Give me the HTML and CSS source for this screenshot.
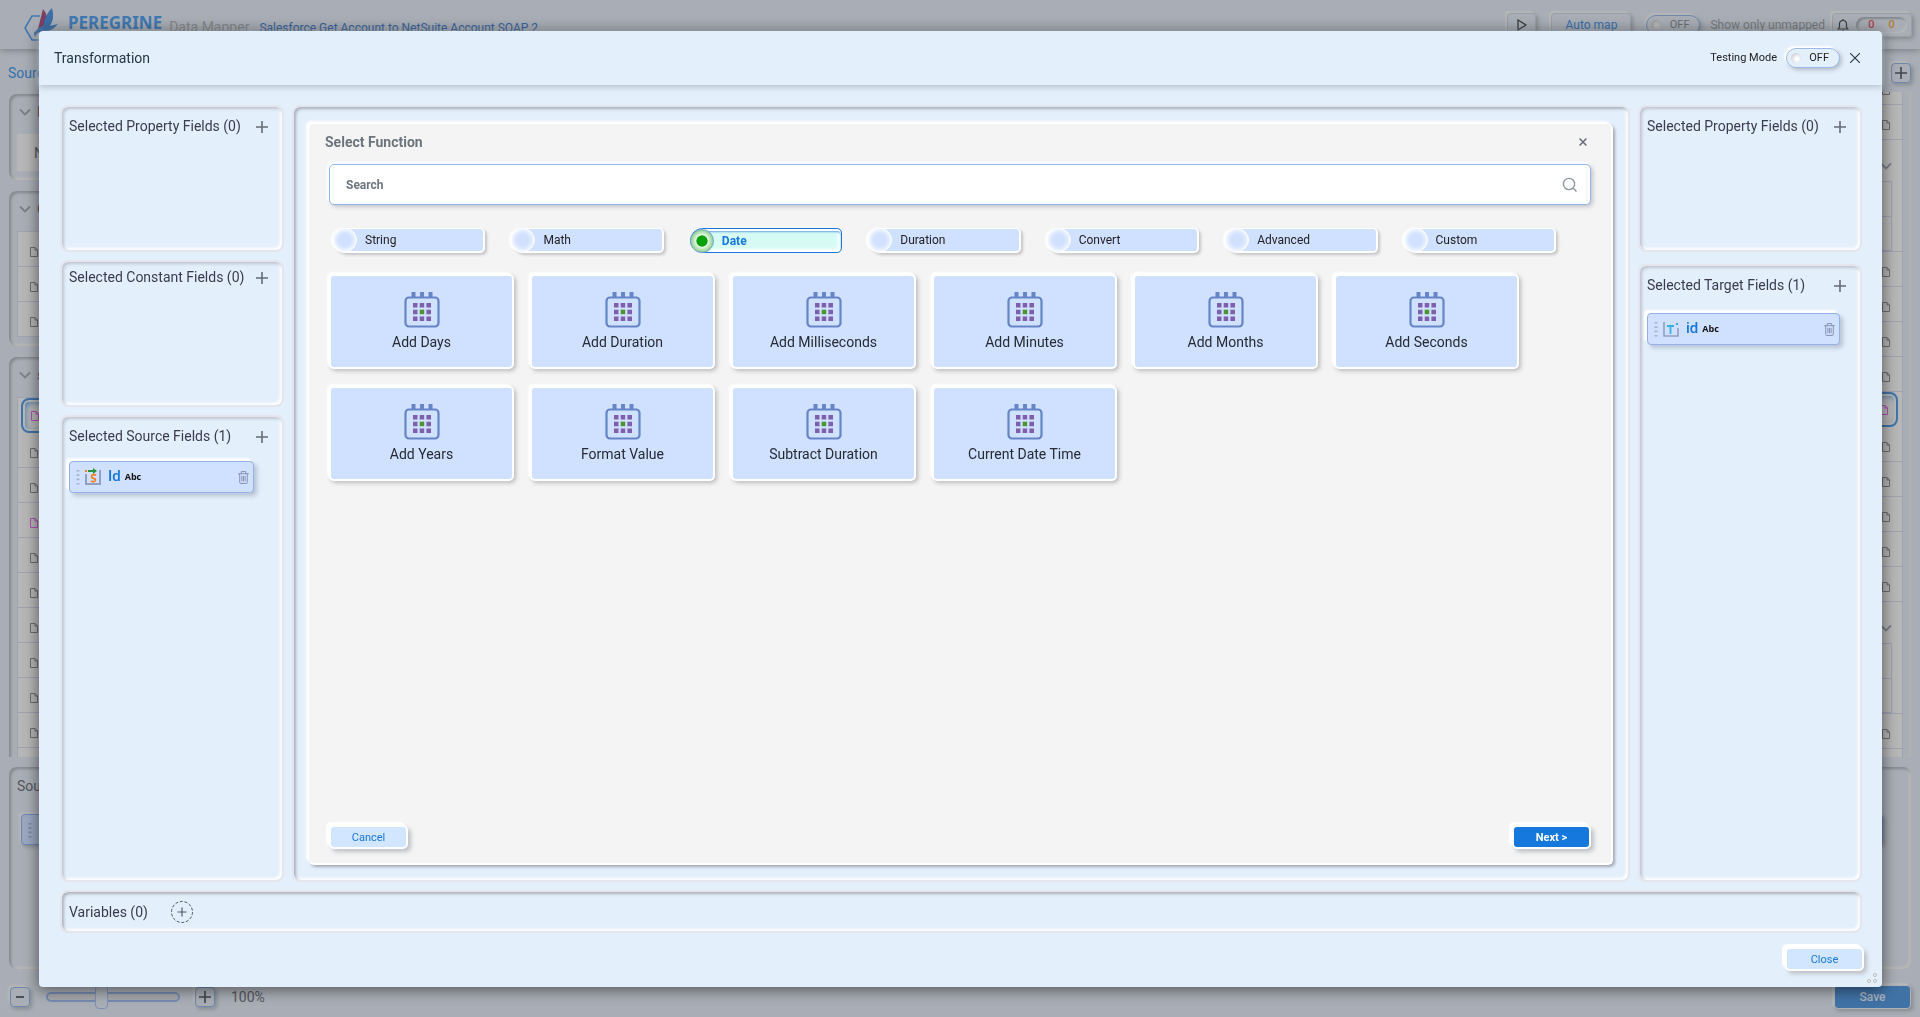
FILE: index.html
```html
<!DOCTYPE html>
<html lang="en">
<head>
<meta charset="utf-8">
<title>Peregrine Data Mapper</title>
<link rel="stylesheet" href="styles.css">
</head>
<body>
<svg class="symbols" width="0" height="0" aria-hidden="true">
  <symbol id="plus" viewBox="0 0 12 12"><path d="M6 0V12M0 6H12" fill="none" stroke="currentColor" stroke-width="1.6"/></symbol>
  <symbol id="cross" viewBox="0 0 10 10"><path d="M0 0L10 10M10 0L0 10" fill="none" stroke="currentColor" stroke-width="1.1"/></symbol>
  <symbol id="file" viewBox="0 0 8 10"><path d="M.5 .5H5L7.500 3V9.500H.5ZM5 .5V3H7.500" fill="none" stroke="currentColor"/></symbol>
  <symbol id="chevron" viewBox="0 0 12 8"><path d="M1 1.500L6 6.500L11 1.500" fill="none" stroke="currentColor" stroke-width="1.800"/></symbol>
  <symbol id="trash" viewBox="0 0 10 12"><path d="M0 2.500H10M3 2.500V.5H7V2.500M1.500 2.500V10.500Q1.500 11.500 2.500 11.500H7.500Q8.500 11.500 8.500 10.500V2.500M3.500 4.500V9.500M5 4.500V9.500M6.500 4.500V9.500" fill="none" stroke="currentColor" stroke-width=".9"/></symbol>
  <symbol id="grip" viewBox="0 0 4 16"><path d="M2 1V16" fill="none" stroke="currentColor" stroke-width="3" stroke-dasharray="1.600 2.700"/></symbol>
  <symbol id="calendar" viewBox="0 0 36 36">
    <rect x="1.500" y="5.500" width="33" height="29" rx="3.500" fill="none" stroke="#6585c6" stroke-width="2.200"/>
    <path d="M7.500 0H11.500V5H7.500ZM16 0H20V5H16ZM24.500 0H28.500V5H24.500Z" fill="#6585c6"/>
    <path d="M9 11H13.500V15.500H9ZM15.700 11H20.200V15.500H15.700ZM22.400 11H27V15.500H22.400ZM9 17.700H13.500V22.200H9ZM22.400 17.700H27V22.200H22.400ZM9 24.400H13.500V29H9ZM15.700 24.400H20.200V29H15.700ZM22.400 24.400H27V29H22.400Z" fill="#7e5fae"/>
    <path d="M15.700 17.700H20.200V22.200H15.700Z" fill="#4a962d"/>
  </symbol>
</svg>

<div class="app">
  <header class="app-header">
    <svg class="logo" viewBox="0 0 38 34">
      <path d="M16 8H8L1 20L8 32H20" fill="none" stroke="#4079b2" stroke-width="1.600"/>
      <path d="M14 21L19 1Q26 9 21 17Z" fill="#7d3f64"/>
      <path d="M10 25Q14 20 19 18Q22 5 28 0Q31 10 26 18L34 16Q26 25 17 24Q13 24 11 29Z" fill="#3c6fa8"/>
    </svg>
    <span class="brand">PEREGRINE</span>
    <span class="product">Data Mapper</span>
    <a class="mapping" href="#">Salesforce Get Account to NetSuite Account SOAP 2</a>
    <div class="app-tools">
      <button class="tool tool-run" aria-label="Run"><svg width="10" height="12" viewBox="0 0 10 12"><path d="M1 1L9 6L1 11Z" fill="none" stroke="#35363b" stroke-width="1.200"/></svg></button>
      <button class="tool tool-map">Auto map</button>
      <label class="unmapped"><span class="switch switch-dim"><input type="checkbox"><span class="knob"></span>OFF</span>Show only unmapped</label>
      <button class="tool tool-alerts" aria-label="Notifications"><svg width="12" height="13" viewBox="0 0 12 13"><path d="M1 10H11L9.500 8V5Q9.500 1.500 6 1.500Q2.500 1.500 2.500 5V8ZM5 12H7M6 0V1.500" fill="none" stroke="#35363b" stroke-width="1.100"/></svg><span class="counts"><span class="errors">0</span><span class="warnings">0</span></span></button>
    </div>
  </header>

  <div class="subbar"><span>Source</span><button class="square" aria-label="Add target"><svg width="12" height="12"><use href="#plus"/></svg></button></div>

  <main class="mapper">
    <div class="side side-left">
      <section class="group"><h2><svg width="12" height="8"><use href="#chevron"/></svg>Property</h2><p class="empty">No fields</p></section>
      <section class="group"><h2><svg width="12" height="8"><use href="#chevron"/></svg>Constant</h2>
        <ul class="rows"><li><svg><use href="#file"/></svg></li><li><svg><use href="#file"/></svg></li><li><svg><use href="#file"/></svg></li></ul></section>
      <section class="group"><h2><svg width="12" height="8"><use href="#chevron"/></svg>sObject</h2>
        <ul class="rows"><li class="mapped chosen"><svg><use href="#file"/></svg></li><li><svg><use href="#file"/></svg></li><li><svg><use href="#file"/></svg></li><li class="mapped"><svg><use href="#file"/></svg></li><li><svg><use href="#file"/></svg></li><li><svg><use href="#file"/></svg></li><li><svg><use href="#file"/></svg></li><li><svg><use href="#file"/></svg></li><li><svg><use href="#file"/></svg></li><li><svg><use href="#file"/></svg></li><li></li></ul></section>
    </div>
    <div class="side side-right">
      <ul class="rows"><li><svg><use href="#file"/></svg></li><li><svg><use href="#file"/></svg></li><li class="nest"><svg class="arrow"><use href="#chevron"/></svg><div class="nest-box"><span></span><span></span></div></li><li><svg><use href="#file"/></svg></li><li><svg><use href="#file"/></svg></li><li><svg><use href="#file"/></svg></li><li><svg><use href="#file"/></svg></li><li class="mapped chosen"><svg><use href="#file"/></svg></li><li><svg><use href="#file"/></svg></li><li><svg><use href="#file"/></svg></li><li><svg><use href="#file"/></svg></li><li><svg><use href="#file"/></svg></li><li><svg><use href="#file"/></svg></li><li class="nest"><svg class="arrow"><use href="#chevron"/></svg><div class="nest-box"><span></span><span></span></div></li><li><svg><use href="#file"/></svg></li><li></li></ul>
    </div>
  </main>

  <section class="links"><h2>Source</h2><div class="link-row"><svg width="4" height="16"><use href="#grip"/></svg></div></section>

  <footer class="zoombar">
    <button class="square" aria-label="Zoom out"><svg width="10" height="10" viewBox="0 0 10 10"><path d="M1 5H9" stroke="currentColor" stroke-width="1.800"/></svg></button>
    <input class="zoom" type="range" min="0" max="100" value="40" aria-label="Zoom">
    <button class="square" aria-label="Zoom in"><svg width="12" height="12"><use href="#plus"/></svg></button>
    <span class="percent">100%</span>
    <button class="save">Save</button>
  </footer>
</div>

<div class="backdrop">
  <div class="dialog" role="dialog" aria-labelledby="dialog-title">
    <header class="dialog-head">
      <h1 id="dialog-title">Transformation</h1>
      <label class="testing">Testing Mode<span class="switch"><input type="checkbox"><span class="knob"></span>OFF</span></label>
      <button class="icon-button head-close" aria-label="Close dialog"><svg width="10" height="10"><use href="#cross"/></svg></button>
    </header>

    <div class="dialog-body">
      <div class="columns">
        <div class="stack">
          <section class="panel short"><div class="panel-head"><h2>Selected Property Fields (0)</h2><button class="icon-button" aria-label="Add property field"><svg width="12" height="12"><use href="#plus"/></svg></button></div></section>
          <section class="panel short tight"><div class="panel-head"><h2>Selected Constant Fields (0)</h2><button class="icon-button" aria-label="Add constant field"><svg width="12" height="12"><use href="#plus"/></svg></button></div></section>
          <section class="panel tall"><div class="panel-head"><h2>Selected Source Fields (1)</h2><button class="icon-button" aria-label="Add source field"><svg width="12" height="12"><use href="#plus"/></svg></button></div>
            <div class="field field-source"><svg class="grip" width="4" height="16"><use href="#grip"/></svg>
              <svg width="18" height="18" viewBox="0 0 18 18"><path d="M2 6V16H16V2" fill="none" stroke="#929fc3" stroke-width="2"/><path d="M1 2H3V4H1Z" fill="#f47b20"/><path d="M4 2H9V0L13 3L9 6V4H4Z" fill="#27933d"/><path d="M12 7.500Q11 6.500 9.500 6.700Q7.500 7 7.500 8.500Q7.500 10 9.500 10.300Q11.800 10.800 11.500 12.200Q11 13.800 9.300 13.700Q7.800 13.600 7 12.700" fill="none" stroke="#f47b20" stroke-width="1.700"/></svg>
              <b>Id</b><small>Abc</small><button class="icon-button delete" aria-label="Delete Id"><svg width="11" height="13"><use href="#trash"/></svg></button></div>
          </section>
        </div>

        <section class="panel stage">
          <div class="picker">
            <div class="picker-head"><h2>Select Function</h2><button class="icon-button" aria-label="Close function list"><svg width="8" height="8" viewBox="0 0 7 7"><path d="M.5 .5L6.500 6.500M6.500 .5L.5 6.500" stroke="currentColor" stroke-width="1.300"/></svg></button></div>
            <div class="search"><input type="search" placeholder="Search" aria-label="Search"><svg width="16" height="16" viewBox="0 0 16 16"><circle cx="7" cy="7" r="5.600" fill="none" stroke="#8d999f" stroke-width="1.400"/><path d="M11 11L14.500 14.500" stroke="#8d999f" stroke-width="1.400"/></svg></div>
            <div class="tabs">
              <label class="tab"><input type="radio" name="kind"><span>String</span></label>
              <label class="tab"><input type="radio" name="kind"><span>Math</span></label>
              <label class="tab tab-on"><input type="radio" name="kind" checked><span>Date</span></label>
              <label class="tab"><input type="radio" name="kind"><span>Duration</span></label>
              <label class="tab"><input type="radio" name="kind"><span>Convert</span></label>
              <label class="tab"><input type="radio" name="kind"><span>Advanced</span></label>
              <label class="tab"><input type="radio" name="kind"><span>Custom</span></label>
            </div>
            <div class="functions">
              <button class="function"><svg><use href="#calendar"/></svg>Add Days</button>
              <button class="function"><svg><use href="#calendar"/></svg>Add Duration</button>
              <button class="function"><svg><use href="#calendar"/></svg>Add Milliseconds</button>
              <button class="function"><svg><use href="#calendar"/></svg>Add Minutes</button>
              <button class="function"><svg><use href="#calendar"/></svg>Add Months</button>
              <button class="function"><svg><use href="#calendar"/></svg>Add Seconds</button>
              <button class="function"><svg><use href="#calendar"/></svg>Add Years</button>
              <button class="function"><svg><use href="#calendar"/></svg>Format Value</button>
              <button class="function"><svg><use href="#calendar"/></svg>Subtract Duration</button>
              <button class="function"><svg><use href="#calendar"/></svg>Current Date Time</button>
            </div>
            <div class="picker-foot"><button class="action">Cancel</button><button class="action primary">Next &gt;</button></div>
          </div>
        </section>

        <div class="stack stack-right">
          <section class="panel short"><div class="panel-head"><h2>Selected Property Fields (0)</h2><button class="icon-button" aria-label="Add property field"><svg width="12" height="12"><use href="#plus"/></svg></button></div></section>
          <section class="panel tall"><div class="panel-head"><h2>Selected Target Fields (1)</h2><button class="icon-button" aria-label="Add target field"><svg width="12" height="12"><use href="#plus"/></svg></button></div>
            <div class="field field-target"><svg class="grip" width="4" height="16"><use href="#grip"/></svg>
              <svg width="18" height="18" viewBox="0 0 18 18"><path d="M2 2V16H16V8" fill="none" stroke="#929fc3" stroke-width="1.600"/><path d="M5 6H12M8.500 6V14" stroke="#35b0e6" stroke-width="1.800"/><path d="M14 3H16V5H14Z" fill="#35b0e6"/></svg>
              <b>id</b><small>Abc</small><button class="icon-button delete" aria-label="Delete id"><svg width="11" height="13"><use href="#trash"/></svg></button></div>
          </section>
        </div>
      </div>

      <section class="panel variables"><h2>Variables (0)</h2><button class="icon-button" aria-label="Add variable"><svg width="24" height="24" viewBox="0 0 24 24"><circle cx="12" cy="12" r="10.500" fill="none" stroke="#4c5f6b" stroke-dasharray="3 1.700"/><path d="M12 7.500V16.500M7.500 12H16.500" stroke="#4c5f6b" stroke-width="1.200"/></svg></button></section>
    </div>

    <footer class="dialog-foot"><button class="action">Close</button></footer>
    <svg class="resize" width="12" height="12" viewBox="0 0 12 12"><g fill="#f5f5f5" stroke="#b9bcc0"><circle cx="9" cy="3" r="1.500"/><circle cx="3" cy="9" r="1.500"/><circle cx="9" cy="9" r="1.500"/></g></svg>
  </div>
</div>
</body>
</html>
```
FILE: styles.css
```css
* { box-sizing: border-box; }
body { margin: 0; font-family: Roboto, "Liberation Sans", sans-serif; font-size: 14px; line-height: 16px; color: #3a3c4e; }
h1, h2, p, ul { margin: 0; padding: 0; font-size: 14px; font-weight: 400; list-style: none; }
button, input { font-family: inherit; margin: 0; }
button { padding: 0; border: 0; background: none; color: inherit; }
svg { display: block; flex: none; }
.symbols { position: absolute; }

/* Mapper page behind the dialog */
.app { display: flex; flex-direction: column; height: 100vh; overflow: hidden; background: #a9aeb6; color: #55575c; }
.app-header { display: flex; flex: none; align-items: flex-start; height: 49px; padding: 8px 8px 0 24px; box-shadow: 0 2px 6px #7f848b; }
.logo { width: 38px; height: 34px; }
.brand { margin: 3px 0 0 6px; font: 700 17px/24px "Noto Sans", sans-serif; color: #4079b2; }
.product { margin: 11px 0 0 7px; font-size: 14px; color: #85878a; }
.mapping { margin: 12px 0 0 10px; font-size: 12px; color: #3763a0; text-decoration: none; }
.app-tools { display: flex; gap: 15px; margin: 5px 0 0 auto; align-items: flex-start; font-size: 12px; }
.tool { display: flex; align-items: center; justify-content: center; height: 24px; border: 1px solid #9a9fa7; border-radius: 4px; box-shadow: -2px -2px 1px #b5b6b8, 2px 2px 4px #868a91; font-size: 12px; }
.tool-run { width: 29px; }
.tool-map { width: 80px; color: #3470ad; }
.tool-alerts { gap: 7px; width: 80px; color: #35363b; }
.counts { display: flex; gap: 14px; padding: 0 12px; line-height: 16px; border-radius: 8px; box-shadow: inset 2px 2px 2px #858990, inset -1px -1px 2px #b9babc; font-weight: 500; font-size: 11px; }
.errors { color: #b34545; }
.warnings { color: #b57b35; }
.unmapped { display: flex; align-items: center; gap: 10px; height: 24px; margin-right: -8px; color: #777a7f; }
.switch { display: flex; align-items: center; width: 54px; height: 20px; padding: 0 10px 0 4px; border: 1px solid #9ab9ea; border-radius: 10px; box-shadow: -2px -2px 2px #fff, 2px 2px 4px #b4bac4; font-size: 11px; color: #222; background: #e3effb; }
.switch input { position: absolute; opacity: 0; }
.knob { width: 10px; height: 10px; margin-right: auto; border-radius: 50%; background: radial-gradient(circle at 60% 60%, #fff 15%, #b9bdc6); }
.switch-dim { border-color: #6f87ab; background: #a9aeb6; color: #6a6c70; box-shadow: -2px -2px 2px #b5b6b8, 2px 2px 4px #868a91; }
.switch-dim .knob { background: radial-gradient(circle at 60% 60%, #b9babc 20%, #8c9097); }
.subbar { display: flex; flex: none; align-items: center; justify-content: space-between; height: 43px; padding: 4px 9px 0 8px; color: #3470ad; }
.square { display: flex; flex: none; align-items: center; justify-content: center; width: 20px; height: 20px; border: 1px solid #6f87ab; border-radius: 4px; color: #41444c; box-shadow: -2px -2px 2px #b5b6b8, 2px 2px 4px #868a91; }
.mapper { display: flex; flex: 1; min-height: 0; justify-content: space-between; padding: 0 9px; overflow: hidden; }
.side { width: 40%; }
.side-left { display: flex; flex-direction: column; gap: 11px; padding-top: 2px; }
.group { flex: none; padding: 9px 8px; border-radius: 8px; box-shadow: inset 2px 2px 3px #84888f, inset -2px -2px 2px #b9b8b5; }
.group h2 { display: flex; align-items: center; gap: 6px; height: 18px; margin-bottom: 13px; padding-left: 2px; color: #55575c; }
.group h2 svg, .arrow { color: #7b8087; }
.empty { height: 37px; padding-left: 17px; line-height: 38px; background: #b7b7b7; }
.rows { background: #b7b7b7; border: solid #a0a4b0; border-width: 1px 0 0 1px; }
.rows li { display: flex; align-items: center; height: 35px; padding: 6px 12px 0; border-bottom: 1px solid #9fa3b0; color: #6b6d70; }
.rows li svg { width: 8px; height: 10px; }
.rows .mapped { color: #b04fb2; }
.rows .chosen { padding: 0 8px; border: 2px solid #3f75ab; border-radius: 8px; box-shadow: inset 0 0 0 2px #b7b7b7, inset 2px 2px 6px #3f75ab; margin-left: 3px; }
.side-right { padding-right: 8px; box-shadow: inset -2px 0 2px #b3b3b0; }
.side-right .rows { margin-top: -23px; border-width: 1px 1px 0 0; }
.side-right li { justify-content: flex-end; }
.side-right .chosen { margin: 0 4px 0 0; }
.rows .nest { flex-direction: column; align-items: flex-end; height: 112px; padding: 0 10px 0 0; }
.rows .arrow { width: 12px; height: 8px; margin: 16px 0 11px; }
.nest-box { width: 80%; border: 1px solid #9fa3b0; }
.nest-box span { display: block; height: 34px; border-top: 1px solid #9fa3b0; }
.nest-box span:first-child { border-top: 0; }
.links { flex: none; height: 202px; margin: 10px 9px 0; padding: 10px 8px; border-radius: 8px; box-shadow: inset 2px 2px 3px #84888f, inset -2px -2px 2px #b9b8b5; }
.links h2 { line-height: 18px; }
.link-row { display: flex; align-items: center; height: 31px; margin: 19px 20px 0 4px; padding-left: 6px; border: 1px solid #6d86b5; border-radius: 4px; background: #9ba8c0; color: #7b87a1; box-shadow: -2px -2px 2px #b5b6b8, 2px 2px 4px #868a91; }
.zoombar { display: flex; flex: none; align-items: center; height: 48px; padding: 8px 9px 0 10px; }
.zoom { appearance: none; width: 134px; height: 10px; margin: 0 15px 0 16px; border: 2px solid #758bb0; border-radius: 5px; background: #a5a7aa; }
.zoom::-webkit-slider-thumb { appearance: none; width: 13px; height: 24px; border: 1px solid #7b90b3; border-radius: 4px; background: #a9aeb6; }
.percent { margin-left: 16px; }
.save { width: 77px; height: 24px; margin-left: auto; border: 1px solid #b0b2b5; border-radius: 4px; background: #4072a6; color: #a9b4c0; font-size: 12px; font-weight: 500; box-shadow: -2px -2px 1px #b5b6b8, 2px 2px 4px #868a91; }

/* Transformation dialog */
.backdrop { position: fixed; inset: 0; display: flex; padding: 31px 38px 30px 39px; }
.dialog { position: relative; display: flex; flex: 1; flex-direction: column; min-width: 0; border-radius: 4px; background: #e3effb; box-shadow: 0 2px 14px 2px rgba(0, 0, 0, .45); }
.dialog-head { display: flex; flex: none; align-items: center; height: 54px; padding: 0 22px 0 15px; box-shadow: 0 2px 6px #b4bfcb; color: #253746; }
.testing { display: flex; align-items: center; gap: 9px; margin-left: auto; font-size: 11px; color: #222; }
.icon-button { display: flex; flex: none; align-items: center; justify-content: center; color: #666c76; }
.head-close { margin-left: 10px; color: #253746; }
.dialog-body { display: flex; flex: 1; flex-direction: column; gap: 8px; min-height: 0; padding: 20px 20px 0 21px; }
.columns { display: grid; flex: 1; grid-template-columns: 224px minmax(0, 1fr) 224px; gap: 8px; min-height: 0; }
.stack { display: flex; flex-direction: column; gap: 8px; }
.stack-right { gap: 12px; }
.panel { border: 2px solid #e4e5ed; border-radius: 8px; box-shadow: inset 2px 2px 3px #bfc6d1, inset -2px -2px 3px #fff; }
.short { flex: none; height: 147px; }
.tall { flex: 1; }
.panel-head { display: flex; align-items: center; justify-content: space-between; height: 38px; padding: 2px 14px 0 7px; }
.panel-head h2 { margin-bottom: 2px; }
.tight .panel-head { height: 30px; }
.field { display: flex; align-items: center; height: 32px; margin-left: 7px; padding: 0 4px 0 6px; border: 1px solid #94b2e8; border-radius: 4px; background: #d0e0ff; box-shadow: -3px -3px 2px #fff, 3px 3px 4px #b9c4d4; }
.field-source { width: 185px; margin-top: 6px; }
.field-target { width: 193px; margin-top: 9px; }
.grip { margin-right: 4px; color: #a9b4cd; }
.field b { margin: 0 4px 2px 6px; font-size: 15px; font-weight: 500; color: #1478dc; }
.field small { font: 700 9px/12px "Open Sans", sans-serif; color: #111; }
.delete { margin-left: auto; color: #8592ad; }
.stage { display: flex; padding: 17px 15px 15px; box-shadow: inset 2px 2px 3px #a9b1bd, inset -2px -2px 3px #fff; }
.picker { display: flex; flex: 1; flex-direction: column; min-width: 0; padding: 10px 20px 14px; border: solid #fff; border-width: 0 2px 2px 0; border-radius: 5px; background: #f4f4f4; box-shadow: -3px -3px 3px #fff, 2px 2px 3px #a3aab5; }
.picker-head { display: flex; align-items: center; justify-content: space-between; height: 16px; margin: 0 4px 14px -4px; }
.picker-head h2 { font-weight: 700; color: #6c757d; }
.search { display: flex; align-items: center; height: 41px; padding: 0 12px 0 16px; border: 1px solid #94b4ec; border-radius: 5px; background: #fff; box-shadow: -2px -2px 2px #fff, 2px 2px 4px #c3c5c9; }
.search input { flex: 1; min-width: 0; padding: 0; border: 0; outline: 0; background: none; font-size: 12px; font-weight: 700; }
.search input::placeholder { color: #6c757d; opacity: 1; }
.tabs { display: grid; grid-template-columns: repeat(7, minmax(0, 1fr)); gap: 26px; margin: 23px 35px 21px 4px; }
.tab { display: flex; align-items: center; gap: 8px; height: 25px; border: 2px solid #fff; border-width: 1px 2px 2px 0; border-radius: 13px 5px 5px 13px; background: #d0e0ff; box-shadow: 2px 2px 3px #c5c5c8; font-size: 12px; color: #222; }
.tab input { appearance: none; flex: none; width: 24px; height: 24px; border: 1px solid #fff; border-radius: 50%; background: #d0e0ff; box-shadow: inset 0 0 5px 1px #fff, -2px 0 2px #fff; }
.tab-on { border: 1px solid #1478dc; background: #d6fbf5; color: #1478dc; font-weight: 700; box-shadow: inset 0 2px 0 #fff, inset 0 3px 2px #65a5e6, inset -3px -3px 3px #fff; }
.tab-on input { margin-left: -1px; border-color: #7aa6d8; background: radial-gradient(circle closest-side, #0aa20a 48%, #e9f8e8 54%, #8fd28c); box-shadow: none; }
.functions { display: flex; flex-wrap: wrap; align-content: flex-start; gap: 17px 16px; flex: 1; }
.function { display: flex; flex-direction: column; align-items: center; gap: 6px; width: 185px; height: 95px; padding-top: 16px; border: 2px solid #fff; border-radius: 5px; background: #d0e0ff; box-shadow: -2px -2px 2px #fff, 2px 2px 4px #bcbcc0; font-size: 14px; line-height: 16px; color: #252a33; }
.function svg { width: 36px; height: 36px; }
.picker-foot { display: flex; flex: none; justify-content: space-between; }
.action { width: 79px; height: 24px; border: 2px solid #fff; border-radius: 5px; background: #d2e6ff; box-shadow: -3px -3px 1px #fff, 3px 3px 4px #bfc2c8; font-size: 11px; color: #1478dc; }
.primary { background: #1478dc; color: #fff; font-weight: 700; }
.variables { display: flex; align-items: center; flex: none; gap: 22px; height: 43px; padding-left: 7px; box-shadow: inset 2px 2px 3px #adb2bb, inset -2px -2px 3px #fff; }
.dialog-foot { display: flex; flex: none; justify-content: flex-end; height: 54px; padding: 14px 18px 0; }
.resize { position: absolute; right: 4px; bottom: 3px; }
```
